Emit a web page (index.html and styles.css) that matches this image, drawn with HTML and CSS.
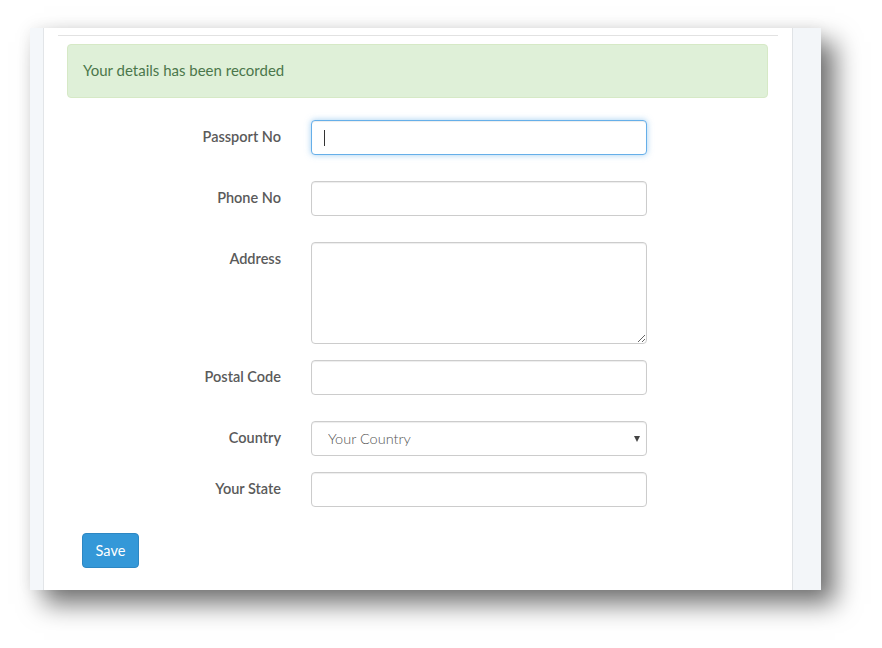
FILE: index.html
```html
<!DOCTYPE html>
<html>
<head>
<meta charset="utf-8">
<link rel="stylesheet" href="styles.css">
</head>
<body>
<div class="window">
  <div class="side-left"></div>
  <div class="main">
    <div class="rule"></div>
    <div class="alert">Your details has been recorded</div>
    <form class="form">
      <div class="row gap26">
        <label class="lbl">Passport No</label>
        <div class="field">
          <input class="ctl focus" type="text">
          <span class="caret"></span>
        </div>
      </div>
      <div class="row gap26">
        <label class="lbl">Phone No</label>
        <div class="field"><input class="ctl" type="text"></div>
      </div>
      <div class="row gap16">
        <label class="lbl">Address</label>
        <div class="field"><textarea class="ctl area"></textarea></div>
      </div>
      <div class="row gap26">
        <label class="lbl">Postal Code</label>
        <div class="field"><input class="ctl" type="text"></div>
      </div>
      <div class="row gap16">
        <label class="lbl">Country</label>
        <div class="field sel">
          <select class="ctl select"><option>Your Country</option></select>
        </div>
      </div>
      <div class="row gap26">
        <label class="lbl">Your State</label>
        <div class="field"><input class="ctl" type="text"></div>
      </div>
      <button type="button" class="btn">Save</button>
    </form>
  </div>
  <div class="side-right"></div>
</div>
</body>
</html>
```
FILE: styles.css
```css
html, body {
  margin: 0;
  padding: 0;
  background: #ffffff;
}
body {
  font-family: Lato, "Open Sans", "Liberation Sans", sans-serif;
  font-size: 14px;
  color: #555;
  min-height: 648px;
  padding-top: 28px;
  box-sizing: border-box;
}
.window {
  margin: 0 0 0 30px;
  width: 791px;
  height: 562px;
  display: flex;
  background: #fff;
  box-shadow: 14px 14px 24px rgba(0,0,0,0.55), 0 0 14px rgba(0,0,0,0.06);
}
.side-left {
  width: 13px;
  background: #f4f7fa;
  border-right: 1px solid #e2e5e8;
}
.side-right {
  width: 28px;
  background: #f3f6f9;
  border-left: 1px solid #e0e3e6;
}
.main {
  flex: 1;
  padding: 0 14px;
}
.rule {
  margin-top: 7px;
  height: 1px;
  background: #e2e2e2;
}
.alert {
  margin: 8px 10px 0 9px;
  height: 52px;
  line-height: 51px;
  padding: 0 15px;
  background: #dff0d8;
  border: 1px solid #d6e9c6;
  border-radius: 4px;
  color: #4b774b;
  font-size: 15px;
}
.form {
  margin-top: 22px;
  display: flex;
  flex-direction: column;
}
.row {
  display: flex;
  align-items: flex-start;
}
.gap26 { margin-bottom: 26px; }
.gap16 { margin-bottom: 16px; }
.lbl {
  width: 223px;
  text-align: right;
  padding-top: 7px;
  line-height: 20px;
  font-weight: 600;
  color: #5a5a5a;
  margin-right: 30px;
  font-size: 14.5px;
}
.field {
  position: relative;
  width: 336px;
}
.ctl {
  box-sizing: border-box;
  width: 336px;
  height: 35px;
  margin: 0;
  border: 1px solid #cccccc;
  border-radius: 4px;
  background: #fff;
  padding: 6px 16px;
  font-family: inherit;
  font-size: 14.5px;
  color: #555;
  box-shadow: inset 0 1px 1px rgba(0,0,0,0.075);
  outline: none;
  display: block;
}
.ctl.focus {
  border-color: #66afe9;
  box-shadow: inset 0 1px 1px rgba(0,0,0,0.075), 0 0 6px rgba(102,175,233,0.6);
}
.caret {
  position: absolute;
  left: 13px;
  top: 10px;
  width: 1px;
  height: 16px;
  background: #333;
}
.area {
  height: 102px;
  resize: vertical;
}
.select {
  -webkit-appearance: none;
  appearance: none;
  color: #555;
  font-weight: 300;
}
.sel::after {
  content: "";
  position: absolute;
  right: 7px;
  top: 15px;
  border-left: 3px solid transparent;
  border-right: 3px solid transparent;
  border-top: 6px solid #444;
}
.btn {
  align-self: flex-start;
  margin-left: 24px;
  width: 57px;
  height: 35px;
  background: #3498d8;
  border: 1px solid #2d87c3;
  border-radius: 4px;
  color: #fff;
  font-family: inherit;
  font-size: 14.5px;
  padding: 0;
}
```
